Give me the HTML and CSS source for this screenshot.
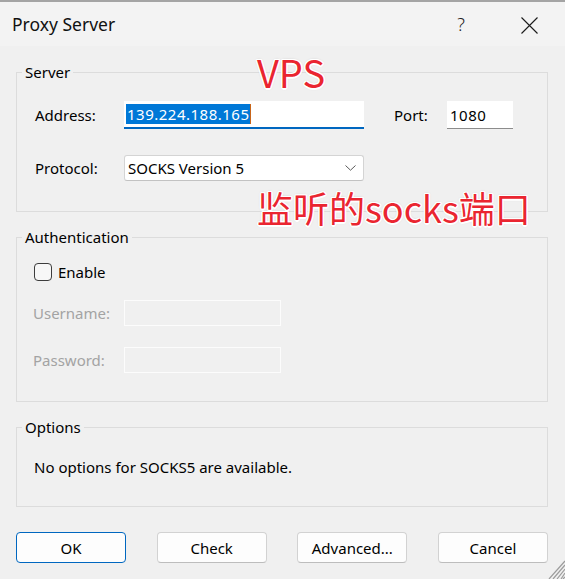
FILE: index.html
```html
<!DOCTYPE html>
<html lang="en">
<head>
<meta charset="utf-8">
<title>Proxy Server</title>
<link rel="stylesheet" href="styles.css">
</head>
<body>
<div class="window">
  <header class="titlebar">
    <span class="title">Proxy Server</span>
    <div class="title-buttons">
      <span class="help">?</span>
      <span class="close">
        <svg width="17" height="17" viewBox="0 0 17 17"><path d="M0.5 0.5L16.5 16.5M16.5 0.5L0.5 16.5" stroke="#1b1b1b" stroke-width="1.1" fill="none"/></svg>
      </span>
    </div>
  </header>

  <main class="content">
    <fieldset class="group">
      <legend>Server</legend>
      <div class="group-body body-server">
        <div class="row row-address">
          <span class="lbl">Address:</span>
          <div class="input input-address"><span class="sel">139.224.188.165</span><span class="caret"></span></div>
          <span class="lbl lbl-port">Port:</span>
          <div class="input input-port">1080</div>
        </div>
        <div class="row row-protocol">
          <span class="lbl">Protocol:</span>
          <div class="select">
            <span>SOCKS Version 5</span>
            <svg class="chev" width="11" height="6" viewBox="0 0 11 6"><path d="M0.5 0.5L5.5 5.2L10.5 0.5" stroke="#5a5a5a" stroke-width="1" fill="none"/></svg>
          </div>
        </div>
      </div>
    </fieldset>

    <fieldset class="group group-auth">
      <legend>Authentication</legend>
      <div class="group-body body-auth">
        <div class="row row-enable">
          <span class="checkbox"></span>
          <span class="check-label">Enable</span>
        </div>
        <div class="row row-user">
          <span class="lbl lbl-disabled">Username:</span>
          <div class="input-disabled"></div>
        </div>
        <div class="row row-pass">
          <span class="lbl lbl-disabled">Password:</span>
          <div class="input-disabled"></div>
        </div>
      </div>
    </fieldset>

    <fieldset class="group group-options">
      <legend>Options</legend>
      <div class="group-body body-options">
        <div class="options-text">No options for SOCKS5 are available.</div>
      </div>
    </fieldset>

    <div class="buttons">
      <button class="btn btn-default">OK</button>
      <button class="btn">Check</button>
      <button class="btn">Advanced...</button>
      <button class="btn">Cancel</button>
    </div>
  </main>

  <div class="note note-vps">VPS</div>
  <div class="note note-port">监听的socks端口</div>

  <svg class="grip" width="18" height="20" viewBox="0 0 18 20">
    <path d="M18 2L2 20M18 6L6 20M18 10L10 20M18 14L14 20M18 18L16 20" stroke="#9c9c9c" stroke-width="1.2" fill="none"/>
  </svg>
</div>
</body>
</html>
```

FILE: styles.css
```css
* { box-sizing: border-box; }

html, body {
  margin: 0;
  padding: 0;
}

body {
  width: 565px;
  height: 579px;
  overflow: hidden;
  background: #f0f0f0;
  font-family: "Noto Sans", "Open Sans", sans-serif;
  font-size: 15px;
  color: #000;
}

.window {
  position: relative;
  width: 565px;
  height: 579px;
  background: #f0f0f0;
}

.titlebar {
  height: 46px;
  border-top: 2px solid #a4a4a4;
  background: #f3f3f3;
  display: flex;
  align-items: center;
  justify-content: space-between;
  padding: 0 27px 0 12px;
}

.title {
  font-size: 17.5px;
  color: #111;
}

.title-buttons {
  display: flex;
  align-items: center;
  gap: 56px;
}

.help {
  font-size: 18px;
  font-weight: 300;
  color: #222;
}

.close {
  display: flex;
  margin-top: 2px;
}

.content {
  padding: 16px 17px 0 16px;
}

.group {
  margin: 0;
  padding: 0;
  border: 1px solid #dcdcdc;
  min-width: 0;
}

.group legend {
  margin-left: 5px;
  padding: 0 3px;
  line-height: 20px;
  height: 20px;
}

.row {
  display: flex;
  align-items: center;
}

.lbl {
  width: 89px;
  flex: none;
}

/* Server */
.body-server {
  padding: 19px 0 29px 18px;
}

.row-address {
  height: 28px;
}

.row-protocol {
  height: 28px;
  margin-top: 25px;
}

.input {
  background: #fff;
  height: 28px;
  display: flex;
  align-items: center;
  letter-spacing: 0.5px;
}

.input-address {
  width: 240px;
  border-bottom: 2px solid #0067c0;
  padding-left: 2px;
}

.sel {
  background: #0078d7;
  color: #fff;
  line-height: 20px;
  padding: 0 0 0 1px;
}

.caret {
  width: 1px;
  height: 20px;
  background: #c8651a;
}

.lbl-port {
  width: 53px;
  margin-left: 30px;
}

.input-port {
  width: 66px;
  border-bottom: 1px solid #8c8c8c;
  padding-left: 3px;
}

.select {
  width: 240px;
  height: 26px;
  background: #fff;
  border: 1px solid #d4d4d4;
  border-bottom-color: #c2c2c2;
  border-radius: 3px;
  display: flex;
  align-items: center;
  justify-content: space-between;
  padding: 0 7px 0 3px;
}

.chev {
  display: block;
}

/* Authentication */
.group-auth {
  margin-top: 15px;
}

.body-auth {
  padding: 15px 0 28px 17px;
}

.row-enable {
  height: 20px;
}

.checkbox {
  width: 18px;
  height: 18px;
  border: 1px solid #3c3c3c;
  border-radius: 4px;
  background: #f7f7f7;
}

.check-label {
  margin-left: 6px;
}

.row-user {
  height: 27px;
  margin-top: 17px;
}

.row-pass {
  height: 27px;
  margin-top: 20px;
}

.lbl-disabled {
  width: 91px;
  margin-left: -1px;
  color: #a3a3a3;
}

.input-disabled {
  width: 157px;
  height: 26px;
  border: 1px solid #fcfcfc;
  background: #f0f0f0;
}

/* Options */
.group-options {
  margin-top: 15px;
}

.body-options {
  padding: 20px 0 29px 17px;
}

.options-text {
  line-height: 20px;
}

/* Buttons */
.buttons {
  margin-top: 25px;
  display: flex;
  justify-content: space-between;
}

.btn {
  width: 110px;
  height: 31px;
  font-family: inherit;
  font-size: 15px;
  color: #000;
  background: #fdfdfd;
  border: 1px solid #d2d2d2;
  border-bottom-color: #bdbdbd;
  border-radius: 4px;
  padding: 0;
}

.btn-default {
  border: 1px solid #0067c0;
}

/* Annotations */
.note {
  position: absolute;
  font-family: "Noto Sans CJK SC", "Noto Sans", sans-serif;
  line-height: 1;
  color: #ea2530;
  text-shadow:
    1.5px 0 0 #fff, -1.5px 0 0 #fff, 0 1.5px 0 #fff, 0 -1.5px 0 #fff,
    1px 1px 0 #fff, -1px -1px 0 #fff, 1px -1px 0 #fff, -1px 1px 0 #fff,
    0 0 3px rgba(0, 0, 0, 0.25);
}

.note-vps {
  font-size: 38px;
  left: 257px;
  top: 53px;
}

.note-port {
  font-size: 36px;
  left: 257px;
  top: 189px;
}

.grip {
  position: absolute;
  right: 0;
  bottom: 0;
}
```
